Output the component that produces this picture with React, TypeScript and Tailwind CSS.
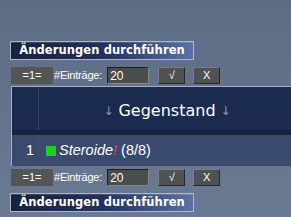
import React from "react";

const Toolbar: React.FC = () => (
  <div className="flex h-[17px] items-stretch font-['Liberation_Sans',Arial,sans-serif] text-[11px] text-white">
    <div className="ml-px flex w-[42px] items-center justify-center bg-[#545556]">=1=</div>
    <span className="ml-[1px] flex items-center tracking-[-0.2px]">#Einträge:</span>
    <div className="ml-[5px] flex w-[42px] items-center border border-[#85888c] border-l-[#1e1e1e] border-t-[#1e1e1e] bg-[#4b4c4e] pl-[2px] text-[12px]">
      20
    </div>
    <button className="ml-[9px] flex w-[27px] items-center justify-center border border-[#7a7d82] border-b-[#26272a] border-r-[#26272a] bg-[#505153] text-[11px]">
      √
    </button>
    <button className="ml-[8px] flex w-[27px] items-center justify-center border border-[#7a7d82] border-b-[#26272a] border-r-[#26272a] bg-[#505153] text-[11px]">
      X
    </button>
  </div>
);

const SubmitButton: React.FC = () => (
  <button className="flex h-[19px] w-[184px] items-center justify-center border border-[#b3b6bb] bg-gradient-to-r from-[#18223f] via-[#22305a] to-[#5a73a6] font-['DejaVu_Sans',Verdana,sans-serif] text-[11.5px] font-bold tracking-[0.1px] text-white shadow-[inset_0_1px_0_rgba(255,255,255,0.15)]">
    Änderungen durchführen
  </button>
);

export default function App() {
  return (
    <div className="h-[217px] w-[291px] overflow-hidden bg-gradient-to-b from-[#5d6c85] to-[#6b7a93] pl-[10px] pt-[41px]">
      <SubmitButton />
      <div className="mt-[7px]">
        <Toolbar />
      </div>

      <div className="ml-px mt-[2px] w-[300px] border-l border-t border-[#a6b0c0]">
        <div className="flex h-[43px] bg-[#1b2a4f]">
          <div className="w-[27px] border-r border-[#33446a]" />
          <div className="flex w-[256px] items-center justify-center pt-[5px] font-['DejaVu_Sans',Verdana,sans-serif] text-[16px] text-white">
            <span className="text-[12px] text-[#8d99ad]">↓</span>
            <span className="mx-[5px]">Gegenstand</span>
            <span className="text-[12px] text-[#8d99ad]">↓</span>
          </div>
        </div>
        <div className="h-[5px] bg-[#18233f]" />
        <div className="flex h-[31px] bg-[#3a4a6e] font-['Liberation_Sans',Arial,sans-serif] text-[14.5px] text-white">
          <div className="flex w-[27px] items-center justify-end border-r border-[#3f4f74] pr-[4px]">1</div>
          <div className="flex items-center pl-[7px]">
            <span className="mr-[3px] inline-block h-[10px] w-[10px] bg-[#19d21e]" />
            <span className="italic">
              Steroide<span className="text-[#e0407a]">!</span>
            </span>
            <span className="ml-[4px]">(8/8)</span>
          </div>
        </div>
      </div>

      <div className="mt-[3px]">
        <Toolbar />
      </div>
      <div className="mt-[7px]">
        <SubmitButton />
      </div>
    </div>
  );
}
